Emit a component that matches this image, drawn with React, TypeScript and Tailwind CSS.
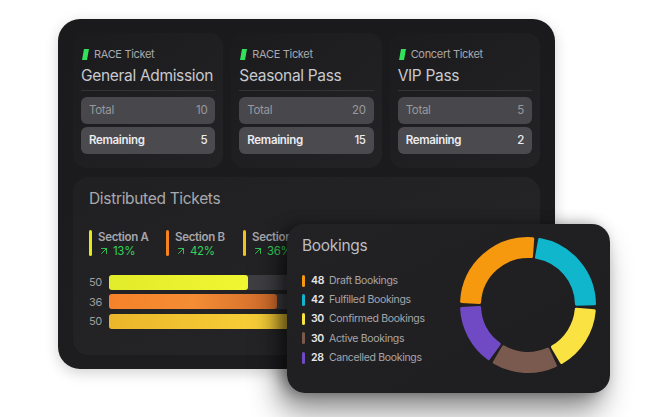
import React from 'react'
import { ArrowUpRight } from 'lucide-react'

interface Ticket {
  kind: string
  name: string
  total: number
  remaining: number
}

const tickets: Ticket[] = [
  { kind: 'RACE Ticket', name: 'General Admission', total: 10, remaining: 5 },
  { kind: 'RACE Ticket', name: 'Seasonal Pass', total: 20, remaining: 15 },
  { kind: 'Concert Ticket', name: 'VIP Pass', total: 5, remaining: 2 },
]

const sections = [
  { name: 'Section A', pct: '13%', color: 'bg-[#e6e81e]' },
  { name: 'Section B', pct: '42%', color: 'bg-[#f5841f]' },
  { name: 'Section C', pct: '36%', color: 'bg-[#f4c01e]' },
]

const bars = [
  { value: 50, fill: 33.5, color: 'bg-gradient-to-r from-[#e3ec2a] to-[#f1f632]' },
  { value: 36, fill: 40.5, color: 'bg-gradient-to-r from-[#f5822a] via-[#f48d34] to-[#cf6a2c]' },
  { value: 50, fill: 72, color: 'bg-gradient-to-r from-[#eab52a] via-[#f7cf38] to-[#7a5e18]' },
]

const bookings = [
  { count: 48, label: 'Draft Bookings', color: '#f7990f' },
  { count: 42, label: 'Fulfilled Bookings', color: '#0fb6cc' },
  { count: 30, label: 'Confirmed Bookings', color: '#fbe243' },
  { count: 30, label: 'Active Bookings', color: '#7a5a4e' },
  { count: 28, label: 'Cancelled Bookings', color: '#7049c4' },
]

const TicketMark = () => (
  <svg width="7" height="11" viewBox="0 0 7 11" className="shrink-0">
    <polygon points="2,0 7,0 5,11 0,11" fill="#32e05a" />
  </svg>
)

const TicketCard: React.FC<{ ticket: Ticket }> = ({ ticket }) => (
  <div className="rounded-[14px] bg-gradient-to-br from-[#1b1b1d] to-[#232325] px-2 pt-[13px] pb-[14px]">
    <div className="flex h-4 items-center gap-[5px] pl-[1px] text-[11px] text-[#a8a8ad]">
      <TicketMark />
      <span>{ticket.kind}</span>
    </div>
    <div className="mt-1 text-[15.5px] leading-5 text-[#c9c9ce]">{ticket.name}</div>
    <div className="mt-1 h-px bg-[#333336]" />
    <div className="mt-[6px] flex flex-col gap-[3px] text-[11.5px]">
      <div className="flex h-[27px] items-center justify-between rounded-[6px] bg-[#48484c] px-2 text-[#98989d]">
        <span>Total</span>
        <span>{ticket.total}</span>
      </div>
      <div className="flex h-[27px] items-center justify-between rounded-[6px] bg-[#4a4a4f] px-2 font-semibold text-[#ececef]">
        <span>Remaining</span>
        <span className="font-medium">{ticket.remaining}</span>
      </div>
    </div>
  </div>
)

// annular sector, angles in degrees, 0 = 3 o'clock, clockwise
const arc = (cx: number, cy: number, R: number, r: number, a0: number, a1: number) => {
  const rad = (a: number) => (a * Math.PI) / 180
  const p = (rr: number, a: number) =>
    `${(cx + rr * Math.cos(rad(a))).toFixed(2)} ${(cy + rr * Math.sin(rad(a))).toFixed(2)}`
  const large = a1 - a0 > 180 ? 1 : 0
  return `M ${p(R, a0)} A ${R} ${R} 0 ${large} 1 ${p(R, a1)} L ${p(r, a1)} A ${r} ${r} 0 ${large} 0 ${p(r, a0)} Z`
}

const Donut = () => {
  const total = bookings.reduce((s, b) => s + b.count, 0)
  let start = 180
  return (
    <svg width="140" height="140" viewBox="0 0 140 140">
      {bookings.map((b) => {
        const sweep = (b.count / total) * 360
        const a0 = start + 3
        const a1 = start + sweep - 3
        start += sweep
        return (
          <path
            key={b.label}
            d={arc(70, 70, 66.5, 48.5, a0, a1)}
            fill={b.color}
            stroke={b.color}
            strokeWidth="3"
            strokeLinejoin="round"
          />
        )
      })}
    </svg>
  )
}

export default function App() {
  return (
    <div
      className="relative h-[417px] w-[665px] overflow-hidden bg-white tracking-[-0.02em]"
      style={{ fontFamily: 'Inter, "Noto Sans", sans-serif' }}
    >
      <div className="ml-[58px] mt-[19px] w-[497px] rounded-[22px] bg-gradient-to-b from-[#1a1a1c] to-[#1d1d1f] px-[15px] pt-[14px] pb-[14px] shadow-[0_4px_14px_rgba(0,0,0,0.18)]">
        <div className="grid grid-cols-3 gap-2">
          {tickets.map((t) => (
            <TicketCard key={t.name} ticket={t} />
          ))}
        </div>

        <div className="mt-[9px] h-[178px] rounded-[16px] bg-gradient-to-br from-[#202022] to-[#262628] px-4 pt-3">
          <div className="text-[15.5px] leading-5 text-[#a9a9ae]">Distributed Tickets</div>
          <div className="mt-[21px] flex">
            {sections.map((s) => (
              <div key={s.name} className="flex w-[77px] gap-[6px]">
                <div className={`h-[26px] w-[3px] rounded-sm ${s.color}`} />
                <div className="flex flex-col text-[11.5px] leading-[14px]">
                  <span className="font-semibold text-[#a5a5aa]">{s.name}</span>
                  <span className="flex items-center gap-[3px] text-[#33d25a]">
                    <ArrowUpRight size={12} strokeWidth={1.75} />
                    {s.pct}
                  </span>
                </div>
              </div>
            ))}
          </div>
          <div className="mt-4 flex flex-col gap-[3px]">
            {bars.map((b, i) => (
              <div key={i} className="flex items-center gap-[7px]">
                <span className="w-[13px] text-right text-[11px] text-[#9c9ca1]">{b.value}</span>
                <div className="h-[15px] flex-1 rounded-[3px] bg-[#3f3f43]">
                  <div className={`h-full rounded-[3px] ${b.color}`} style={{ width: `${b.fill}%` }} />
                </div>
              </div>
            ))}
          </div>
        </div>
      </div>

      <div className="absolute left-[287px] top-[224px] flex h-[169px] w-[323px] rounded-[18px] bg-gradient-to-br from-[#222224] to-[#1e1e20] shadow-[-8px_18px_30px_rgba(0,0,0,0.45),-6px_0_14px_rgba(0,0,0,0.35)]">
        <div className="flex-1 pl-[15px] pt-3">
          <div className="text-[15.5px] leading-5 text-[#bcbcc1]">Bookings</div>
          <div className="mt-[15px] flex flex-col">
            {bookings.map((b) => (
              <div key={b.label} className="flex h-[19.25px] items-center text-[10.5px]">
                <span className="h-3 w-[3px] rounded-sm" style={{ backgroundColor: b.color }} />
                <span className="ml-[6px] w-[13px] font-semibold text-[#e6e6ea]">{b.count}</span>
                <span className="ml-[5px] text-[#a6a6ab]">{b.label}</span>
              </div>
            ))}
          </div>
        </div>
        <div className="mr-3 mt-[11px]">
          <Donut />
        </div>
      </div>
    </div>
  )
}
